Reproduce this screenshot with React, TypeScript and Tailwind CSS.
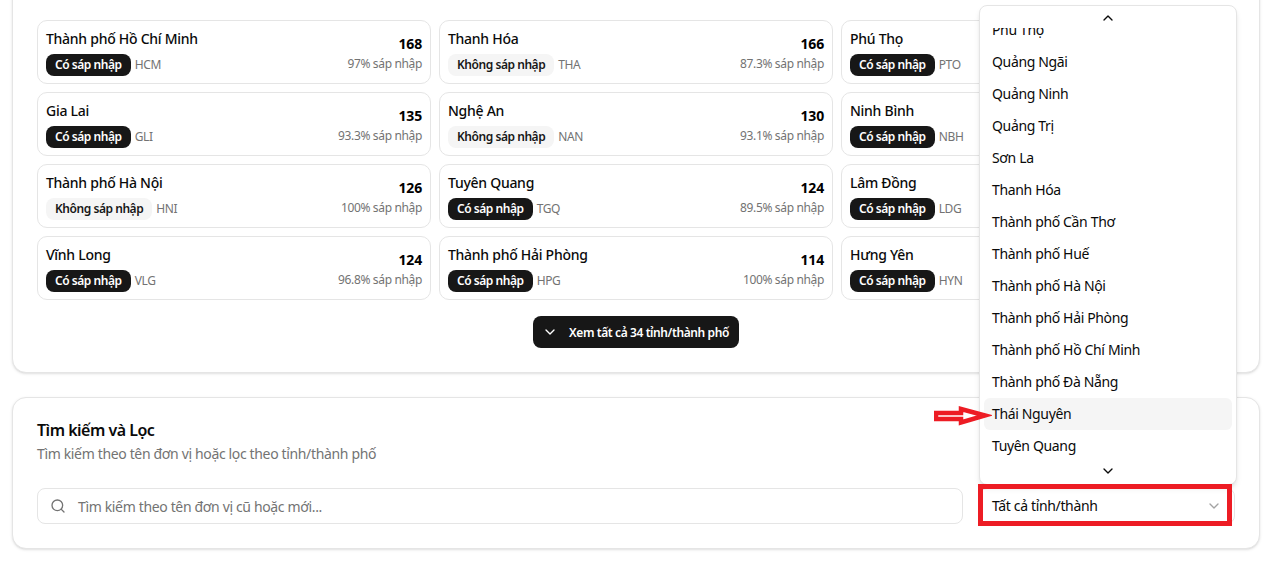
import { ChevronDown, ChevronUp, Search } from "lucide-react";

type Province = {
  name: string;
  code: string;
  merged: boolean;
  count?: number;
  percent?: string;
};

const provinces: Province[] = [
  { name: "Thành phố Hồ Chí Minh", code: "HCM", merged: true, count: 168, percent: "97%" },
  { name: "Thanh Hóa", code: "THA", merged: false, count: 166, percent: "87.3%" },
  { name: "Phú Thọ", code: "PTO", merged: true },
  { name: "Gia Lai", code: "GLI", merged: true, count: 135, percent: "93.3%" },
  { name: "Nghệ An", code: "NAN", merged: false, count: 130, percent: "93.1%" },
  { name: "Ninh Bình", code: "NBH", merged: true },
  { name: "Thành phố Hà Nội", code: "HNI", merged: false, count: 126, percent: "100%" },
  { name: "Tuyên Quang", code: "TGQ", merged: true, count: 124, percent: "89.5%" },
  { name: "Lâm Đồng", code: "LDG", merged: true },
  { name: "Vĩnh Long", code: "VLG", merged: true, count: 124, percent: "96.8%" },
  { name: "Thành phố Hải Phòng", code: "HPG", merged: true, count: 114, percent: "100%" },
  { name: "Hưng Yên", code: "HYN", merged: true },
];

const options = [
  "Phú Thọ",
  "Quảng Ngãi",
  "Quảng Ninh",
  "Quảng Trị",
  "Sơn La",
  "Thanh Hóa",
  "Thành phố Cần Thơ",
  "Thành phố Huế",
  "Thành phố Hà Nội",
  "Thành phố Hải Phòng",
  "Thành phố Hồ Chí Minh",
  "Thành phố Đà Nẵng",
  "Thái Nguyên",
  "Tuyên Quang",
];

const ProvinceCard = ({ province }: { province: Province }) => {
  return (
    <div className="h-16 rounded-[10px] border border-[#e5e5e5] bg-white px-2 pt-2 flex justify-between">
      <div className="flex flex-col">
        <h3 className="-mt-px text-sm font-medium tracking-[-0.27px] leading-[22px] text-[#0a0a0a]">{province.name}</h3>
        <div className="flex items-center gap-1 mt-[4px]">
          {province.merged ? (
            <span className="h-[22px] px-[9px] rounded-lg bg-[#171717] text-white text-xs font-semibold tracking-[-0.45px] leading-[22px]">
              Có sáp nhập
            </span>
          ) : (
            <span className="h-[22px] px-[9px] rounded-lg bg-[#f5f5f5] text-[#171717] text-xs font-semibold tracking-[-0.45px] leading-[22px]">
              Không sáp nhập
            </span>
          )}
          <span className="text-xs text-[#737373]">{province.code}</span>
        </div>
      </div>
      {province.count && (
        <div className="flex flex-col items-end pt-[5px]">
          <span className="text-sm font-bold tracking-[-0.2px] leading-5 text-black">{province.count}</span>
          <span className="text-xs leading-4 mt-[2px] text-[#737373]">{province.percent} sáp nhập</span>
        </div>
      )}
    </div>
  );
};

export default function App() {
  return (
    <div className="relative h-[561px] overflow-hidden bg-white pl-3 pr-6 tracking-[-0.35px] font-['Noto_Sans','Open_Sans',sans-serif]">
      <section className="-mt-6 h-[397px] rounded-[14px] border border-[#e5e5e5] bg-white px-6 pt-[43px] shadow-sm">
        <div className="grid grid-cols-3 gap-2">
          {provinces.map((province) => (
            <ProvinceCard key={province.code} province={province} />
          ))}
        </div>
        <div className="flex justify-center mt-4">
          <button className="h-8 pl-[9px] pr-[10px] rounded-lg bg-[#171717] text-white text-xs font-semibold tracking-[-0.4px] flex items-center gap-[11px]">
            <ChevronDown className="w-4 h-4" />
            <span className="mt-px">Xem tất cả 34 tỉnh/thành phố</span>
          </button>
        </div>
      </section>

      <section className="mt-6 h-[152px] rounded-[14px] border border-[#e5e5e5] bg-white px-6 pt-[20px] shadow-sm">
        <h2 className="text-base font-semibold tracking-[-0.5px] leading-6 text-[#0a0a0a]">Tìm kiếm và Lọc</h2>
        <p className="text-sm leading-5 mt-[2px] text-[#737373]">Tìm kiếm theo tên đơn vị hoặc lọc theo tỉnh/thành phố</p>
        <div className="flex gap-4 mt-6">
          <div className="flex-1 h-9 rounded-lg border border-[#e5e5e5] flex items-center gap-3 px-3">
            <Search className="w-4 h-4 text-[#737373]" />
            <span className="mt-px text-sm text-[#737373]">Tìm kiếm theo tên đơn vị cũ hoặc mới...</span>
          </div>
          <div className="w-[256px] h-9 rounded-lg border border-[#e5e5e5] flex items-center justify-between px-3">
            <span className="text-sm text-[#0a0a0a]">Tất cả tỉnh/thành</span>
            <ChevronDown className="w-4 h-4 text-[#a3a3a3]" />
          </div>
        </div>
      </section>

      <div className="absolute left-[979px] top-[5px] w-[258px] h-[480px] rounded-lg border border-[#e5e5e5] bg-white shadow-md flex flex-col overflow-hidden">
        <div className="h-[22px] pt-[1px] shrink-0 flex items-center justify-center text-[#0a0a0a]">
          <ChevronUp className="w-4 h-4" />
        </div>
        <div className="h-[434px] shrink-0 overflow-hidden px-1">
          <ul className="-mt-[14px]">
            {options.map((option) => (
              <li
                key={option}
                className={
                  option === "Thái Nguyên"
                    ? "h-8 px-2 rounded-md bg-[#f5f5f5] text-sm leading-8 text-[#0a0a0a]"
                    : "h-8 px-2 rounded-md text-sm leading-8 text-[#0a0a0a]"
                }
              >
                {option}
              </li>
            ))}
          </ul>
        </div>
        <div className="flex-1 pb-1 flex items-center justify-center text-[#0a0a0a]">
          <ChevronDown className="w-4 h-4" />
        </div>
      </div>

      {/* annotation drawn on top of the screenshot */}
      <div className="absolute left-[978px] top-[484px] w-[254px] h-[42px] border-[5px] border-[#ed1c24]" />
      <svg className="absolute left-[934px] top-[406px]" width="58" height="20" viewBox="0 0 58 20" fill="none">
        <path d="M2 7H27V3L51 9.5L27 16.5V13H2Z" fill="#fff" stroke="#ed1c24" strokeWidth="4.5" />
      </svg>
    </div>
  );
}
